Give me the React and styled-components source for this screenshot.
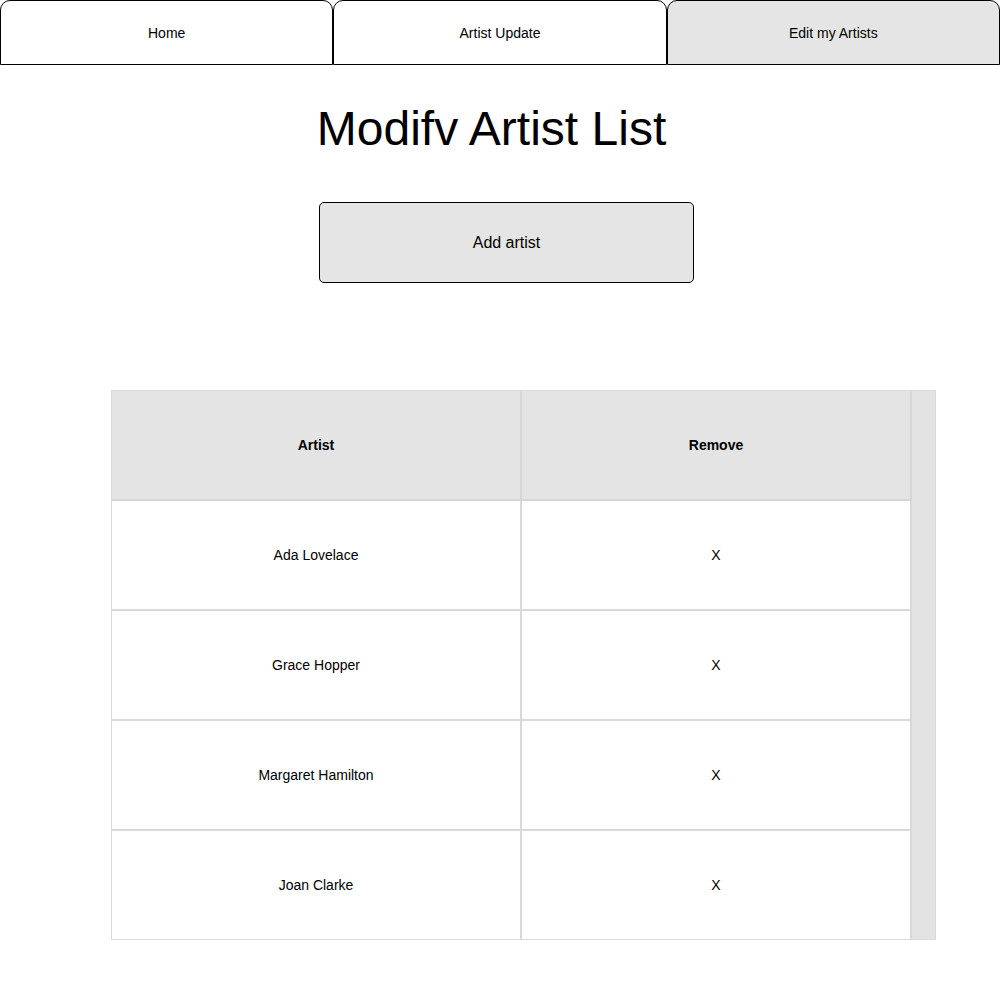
import React from 'react';
import styled, { createGlobalStyle } from 'styled-components';

const GlobalStyle = createGlobalStyle`
  body {
    margin: 0;
    background: #fff;
    font-family: "Liberation Sans", Arial, sans-serif;
    color: #000;
  }
`;

const TabBar = styled.nav`
  display: flex;
  height: 65px;
`;

const Tab = styled.div`
  flex: 1;
  display: flex;
  align-items: center;
  justify-content: center;
  border: 1px solid #000;
  border-radius: 10px 10px 0 0;
  background: ${({ active }) => (active ? '#e5e5e5' : '#fff')};
  font-size: 14px;
  cursor: pointer;
`;

const Title = styled.h1`
  margin: 40px 0 0;
  padding-right: 17px;
  height: 43px;
  font-size: 48px;
  line-height: 48px;
  font-weight: normal;
  text-align: center;
`;

const ButtonRow = styled.div`
  display: flex;
  justify-content: center;
  padding-left: 13px;
  margin-top: 54px;
`;

const AddButton = styled.button`
  width: 375px;
  height: 81px;
  background: #e5e5e5;
  border: 1px solid #000;
  border-radius: 5px;
  font-family: inherit;
  font-size: 16px;
  color: #000;
`;

const TableWrap = styled.div`
  margin: 107px 0 0 111px;
  width: 825px;
  box-sizing: border-box;
  background: #e3e3e3;
  border: 1px solid #dadada;
  padding-right: 23px;
`;

const Table = styled.table`
  width: 100%;
  border-collapse: collapse;
  font-size: 14px;
`;

const Th = styled.th`
  height: 108px;
  padding: 0;
  background: #e4e4e4;
  border: 2px solid #d6d6d6;
  border-top: none;
  border-left: none;
  font-weight: bold;
  width: ${({ w }) => w};
`;

const Td = styled.td`
  height: 108px;
  padding: 0;
  background: #fff;
  border: 2px solid #d9d9d9;
  border-left: none;
  border-bottom: ${({ last }) => (last ? 'none' : '2px solid #d9d9d9')};
  text-align: center;
`;

const artists = ['Ada Lovelace', 'Grace Hopper', 'Margaret Hamilton', 'Joan Clarke'];

export default function App() {
  return (
    <>
      <GlobalStyle />
      <TabBar>
        <Tab>Home</Tab>
        <Tab>Artist Update</Tab>
        <Tab active>Edit my Artists</Tab>
      </TabBar>
      <Title>Modifv Artist List</Title>
      <ButtonRow>
        <AddButton>Add artist</AddButton>
      </ButtonRow>
      <TableWrap>
        <Table>
          <thead>
            <tr>
              <Th w="408px">Artist</Th>
              <Th>Remove</Th>
            </tr>
          </thead>
          <tbody>
            {artists.map((name, i) => {
              const last = i === artists.length - 1;
              return (
                <tr key={name}>
                  <Td last={last}>{name}</Td>
                  <Td last={last}>X</Td>
                </tr>
              );
            })}
          </tbody>
        </Table>
      </TableWrap>
    </>
  );
}
